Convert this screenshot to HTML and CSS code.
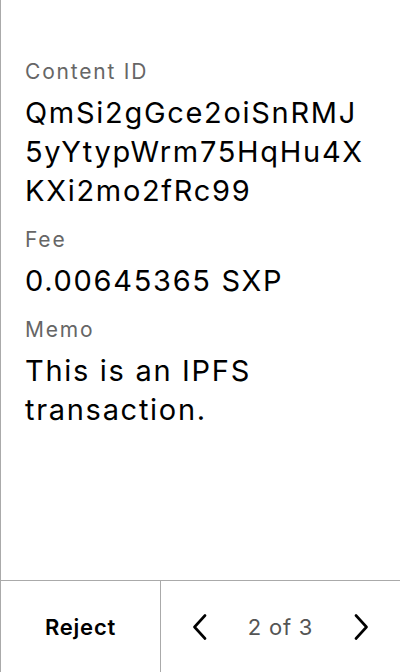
FILE: index.html
```html
<!DOCTYPE html>
<html>
<head>
<meta charset="utf-8">
<link rel="stylesheet" href="styles.css">
</head>
<body>
<div class="screen">
  <div class="content">
    <div class="field">
      <div class="label">Content ID</div>
      <div class="value">QmSi2gGce2oiSnRMJ 5yYtypWrm75HqHu4X KXi2mo2fRc99</div>
    </div>
    <div class="field">
      <div class="label">Fee</div>
      <div class="value">0.00645365 SXP</div>
    </div>
    <div class="field">
      <div class="label">Memo</div>
      <div class="value">This is an IPFS transaction.</div>
    </div>
  </div>
  <div class="footer">
    <div class="reject">Reject</div>
    <div class="pager">
      <svg class="chev" width="16" height="26" viewBox="0 0 16 26"><path d="M13 1.5 L2.5 13 L13 24.5" fill="none" stroke="#000" stroke-width="2.6" stroke-linecap="round" stroke-linejoin="round"/></svg>
      <span class="count">2 of 3</span>
      <svg class="chev" width="16" height="26" viewBox="0 0 16 26"><path d="M3 1.5 L13.5 13 L3 24.5" fill="none" stroke="#000" stroke-width="2.6" stroke-linecap="round" stroke-linejoin="round"/></svg>
    </div>
  </div>
</div>
</body>
</html>
```

FILE: styles.css
```css
html, body {
  margin: 0;
  padding: 0;
  background: #fff;
}
.screen {
  width: 400px;
  height: 672px;
  box-sizing: border-box;
  border-left: 1px solid #aaaaaa;
  display: flex;
  flex-direction: column;
  font-family: Inter, "Noto Sans", sans-serif;
  color: #000;
}
.content {
  flex: 1;
  padding: 58px 24px 0 24px;
  display: flex;
  flex-direction: column;
  gap: 16px;
}
.field {
  display: flex;
  flex-direction: column;
  gap: 7px;
}
.label {
  font-size: 21px;
  line-height: 28px;
  letter-spacing: 1.8px;
  color: #666666;
}
.value {
  font-size: 29px;
  line-height: 39px;
  letter-spacing: 1.7px;
  width: 365px;
}
.footer {
  height: 92px;
  box-sizing: border-box;
  border-top: 1px solid #aaaaaa;
  display: flex;
}
.reject {
  width: 159px;
  border-right: 1px solid #aaaaaa;
  display: flex;
  align-items: center;
  justify-content: center;
  font-size: 22px;
  font-weight: 600;
  letter-spacing: 0.8px;
}
.pager {
  flex: 1;
  display: flex;
  align-items: center;
  justify-content: space-between;
  padding: 0 31px 0 31px;
}
.count {
  font-size: 22px;
  letter-spacing: 0.8px;
  color: #555555;
}
.chev {
  display: block;
}
```
